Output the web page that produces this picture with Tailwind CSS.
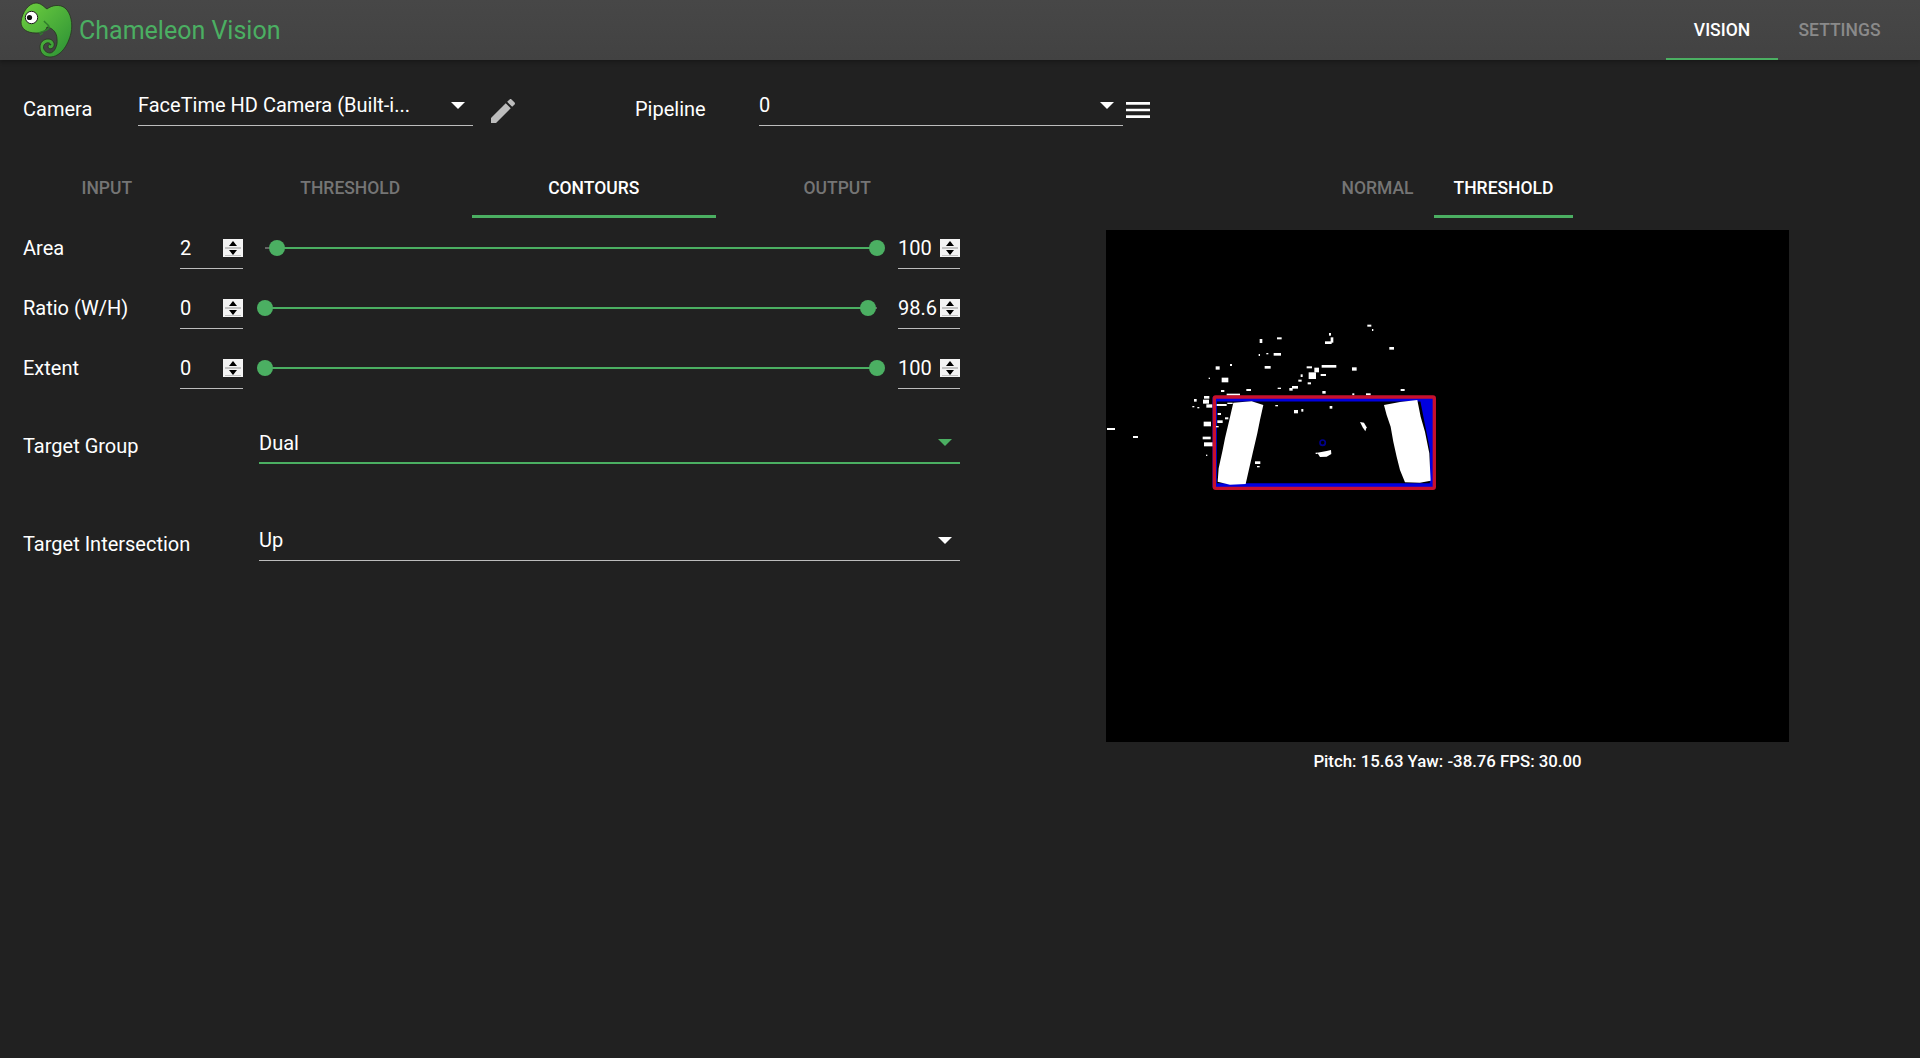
<!DOCTYPE html>
<html lang="en">
<head>
  <meta charset="UTF-8" />
  <title>Chameleon Vision</title>
  <script src="https://cdn.jsdelivr.net/npm/@tailwindcss/browser@4"></script>
</head>
<body class="bg-[#212121] text-white font-[Roboto,sans-serif] min-h-screen overflow-hidden subpixel-antialiased">

  <!-- App bar -->
  <header class="h-[60px] flex items-center justify-between bg-gradient-to-b from-[#474747] to-[#424242] shadow-[0_2px_4px_rgba(0,0,0,0.3)]">
    <div class="flex items-center">
      <svg class="ml-[20px] w-[54px] h-[60px]" viewBox="20 0 54 60">
        <defs>
          <linearGradient id="skin" x1="0" y1="0" x2="1" y2="1">
            <stop offset="0" stop-color="#6fd03f" />
            <stop offset="1" stop-color="#2a8f35" />
          </linearGradient>
        </defs>
        <path fill="url(#skin)" stroke="#26331f" stroke-width="0.8" d="M21 22 C22 12 29 3 36 3 C41 3 44 7 47 9 C52 5 60 4 65 8 C71 13 73 24 71 33 C68 46 60 57 50 57 C44 57 40 53 40 47 C40 42 44 39 48 39 C52 39 55 42 54 46 C53 49 49 50 48 47 C48 45 49 44 51 45 C50 42 46 42 44 45 C42 49 46 53 50 53 C54 53 58 46 57 39 C57 33 53 28 47 27 C46 31 42 33 36 33 C27 33 21 29 21 22 Z" />
        <path fill="none" stroke="#2f7d2c" stroke-width="1.4" d="M44 21 C46 24 50 25 49 28 C47 31 43 31 39 33 M43 33 L40 35" />
        <circle cx="31.5" cy="17.5" r="6.2" fill="#fff" stroke="#1c1c1c" stroke-width="1" />
        <circle cx="29.5" cy="17.5" r="2.6" fill="#111" />
      </svg>
      <span class="ml-[5px] pt-[2px] text-[25px] text-[#4baf62]">Chameleon Vision</span>
    </div>
    <nav class="flex h-full mr-[19px] text-[17.5px] font-medium">
      <a class="h-full w-[112px] pt-[3px] flex items-center justify-center border-b-2 border-[#4baf62]">VISION</a>
      <a class="h-full w-[123px] pt-[3px] flex items-center justify-center border-b-2 border-transparent text-[#8a8a8a]">SETTINGS</a>
    </nav>
  </header>

  <main class="pt-[25px]">
    <!-- Camera / pipeline -->
    <div class="flex pl-[23px] h-[41px]">
      <label class="w-[115px] pt-[12px] text-[20px] leading-[24px]">Camera</label>
      <div class="w-[335px] h-[41px] border-b border-[#bdbdbd] flex items-center justify-between pr-[8px] text-[20px]">
        <span>FaceTime HD Camera (Built-i...</span>
        <svg class="w-[14px] h-[7px]" viewBox="0 0 14 7"><polygon points="0,0 14,0 7,7" fill="#fff" /></svg>
      </div>
      <svg class="ml-[14px] mt-[10px] w-[32px] h-[32px]" viewBox="0 0 24 24"><path fill="#bdbdbd" d="M20.71,7.04C21.1,6.65 21.1,6 20.71,5.63L18.37,3.29C18,2.9 17.35,2.9 16.96,3.29L15.12,5.12L18.87,8.87M3,17.25V21H6.75L17.81,9.93L14.06,6.18L3,17.25Z" /></svg>
      <label class="ml-[116px] w-[124px] pt-[12px] text-[20px] leading-[24px]">Pipeline</label>
      <div class="w-[364px] h-[41px] border-b border-[#bdbdbd] flex items-center justify-between pr-[9px] text-[20px]">
        <span>0</span>
        <svg class="w-[14px] h-[7px]" viewBox="0 0 14 7"><polygon points="0,0 14,0 7,7" fill="#fff" /></svg>
      </div>
      <svg class="ml-[-1px] mt-[9px] w-[32px] h-[32px]" viewBox="0 0 24 24"><path fill="#fff" d="M3,6H21V8H3V6M3,11H21V13H3V11M3,16H21V18H3V16Z" /></svg>
    </div>

    <div class="flex">
      <!-- Left column -->
      <section class="w-[960px] shrink-0">
        <div class="mt-[34px] ml-[-15px] flex h-[58px] text-[17.5px] font-medium text-[#757575]">
          <a class="w-[243.5px] pt-[2px] flex items-center justify-center border-b-[3px] border-transparent">INPUT</a>
          <a class="w-[243.5px] pt-[2px] flex items-center justify-center border-b-[3px] border-transparent">THRESHOLD</a>
          <a class="w-[243.5px] pt-[2px] flex items-center justify-center border-b-[3px] border-[#4baf62] text-white">CONTOURS</a>
          <a class="w-[243.5px] pt-[2px] flex items-center justify-center border-b-[3px] border-transparent">OUTPUT</a>
        </div>

        <div class="pl-[23px]">
          <div class="flex items-center h-[60px]">
            <label class="w-[157px] text-[20px]">Area</label>
            <div class="w-[63px] h-[41px] border-b border-[#bdbdbd] flex items-center justify-between">
              <input type="text" value="2" class="w-[40px] bg-transparent text-[20px] outline-none" />
              <svg class="w-[20px] h-[18px]" viewBox="0 0 20 18"><rect width="20" height="18" fill="#f4f4f4" /><rect x="2" y="8" width="16" height="2" fill="#c4c4c4" /><rect x="2" y="16" width="16" height="1" fill="#c4c4c4" /><polygon points="10,2 6,7 14,7" fill="#000" /><polygon points="6,11 14,11 10,16" fill="#000" /></svg>
            </div>
            <div class="relative flex-1 h-[2px] mx-[21.5px] bg-white/30">
              <div class="absolute inset-y-0 bg-[#4baf62]" style="left:2%;right:0%"></div>
              <div class="absolute top-[-7px] -ml-[8px] w-[16px] h-[16px] rounded-full bg-[#4baf62]" style="left:2%"></div>
              <div class="absolute top-[-7px] -ml-[8px] w-[16px] h-[16px] rounded-full bg-[#4baf62]" style="left:100%"></div>
            </div>
            <div class="w-[62px] h-[41px] border-b border-[#bdbdbd] flex items-center justify-between">
              <input type="text" value="100" class="w-[40px] bg-transparent text-[20px] outline-none" />
              <svg class="w-[20px] h-[18px]" viewBox="0 0 20 18"><rect width="20" height="18" fill="#f4f4f4" /><rect x="2" y="8" width="16" height="2" fill="#c4c4c4" /><rect x="2" y="16" width="16" height="1" fill="#c4c4c4" /><polygon points="10,2 6,7 14,7" fill="#000" /><polygon points="6,11 14,11 10,16" fill="#000" /></svg>
            </div>
          </div>
          <div class="flex items-center h-[60px]">
            <label class="w-[157px] text-[20px]">Ratio (W/H)</label>
            <div class="w-[63px] h-[41px] border-b border-[#bdbdbd] flex items-center justify-between">
              <input type="text" value="0" class="w-[40px] bg-transparent text-[20px] outline-none" />
              <svg class="w-[20px] h-[18px]" viewBox="0 0 20 18"><rect width="20" height="18" fill="#f4f4f4" /><rect x="2" y="8" width="16" height="2" fill="#c4c4c4" /><rect x="2" y="16" width="16" height="1" fill="#c4c4c4" /><polygon points="10,2 6,7 14,7" fill="#000" /><polygon points="6,11 14,11 10,16" fill="#000" /></svg>
            </div>
            <div class="relative flex-1 h-[2px] mx-[21.5px] bg-white/30">
              <div class="absolute inset-y-0 bg-[#4baf62]" style="left:0%;right:1.4%"></div>
              <div class="absolute top-[-7px] -ml-[8px] w-[16px] h-[16px] rounded-full bg-[#4baf62]" style="left:0%"></div>
              <div class="absolute top-[-7px] -ml-[8px] w-[16px] h-[16px] rounded-full bg-[#4baf62]" style="left:98.6%"></div>
            </div>
            <div class="w-[62px] h-[41px] border-b border-[#bdbdbd] flex items-center justify-between">
              <input type="text" value="98.6" class="w-[40px] bg-transparent text-[20px] outline-none" />
              <svg class="w-[20px] h-[18px]" viewBox="0 0 20 18"><rect width="20" height="18" fill="#f4f4f4" /><rect x="2" y="8" width="16" height="2" fill="#c4c4c4" /><rect x="2" y="16" width="16" height="1" fill="#c4c4c4" /><polygon points="10,2 6,7 14,7" fill="#000" /><polygon points="6,11 14,11 10,16" fill="#000" /></svg>
            </div>
          </div>
          <div class="flex items-center h-[60px]">
            <label class="w-[157px] text-[20px]">Extent</label>
            <div class="w-[63px] h-[41px] border-b border-[#bdbdbd] flex items-center justify-between">
              <input type="text" value="0" class="w-[40px] bg-transparent text-[20px] outline-none" />
              <svg class="w-[20px] h-[18px]" viewBox="0 0 20 18"><rect width="20" height="18" fill="#f4f4f4" /><rect x="2" y="8" width="16" height="2" fill="#c4c4c4" /><rect x="2" y="16" width="16" height="1" fill="#c4c4c4" /><polygon points="10,2 6,7 14,7" fill="#000" /><polygon points="6,11 14,11 10,16" fill="#000" /></svg>
            </div>
            <div class="relative flex-1 h-[2px] mx-[21.5px] bg-white/30">
              <div class="absolute inset-y-0 bg-[#4baf62]" style="left:0%;right:0%"></div>
              <div class="absolute top-[-7px] -ml-[8px] w-[16px] h-[16px] rounded-full bg-[#4baf62]" style="left:0%"></div>
              <div class="absolute top-[-7px] -ml-[8px] w-[16px] h-[16px] rounded-full bg-[#4baf62]" style="left:100%"></div>
            </div>
            <div class="w-[62px] h-[41px] border-b border-[#bdbdbd] flex items-center justify-between">
              <input type="text" value="100" class="w-[40px] bg-transparent text-[20px] outline-none" />
              <svg class="w-[20px] h-[18px]" viewBox="0 0 20 18"><rect width="20" height="18" fill="#f4f4f4" /><rect x="2" y="8" width="16" height="2" fill="#c4c4c4" /><rect x="2" y="16" width="16" height="1" fill="#c4c4c4" /><polygon points="10,2 6,7 14,7" fill="#000" /><polygon points="6,11 14,11 10,16" fill="#000" /></svg>
            </div>
          </div>

          <div class="flex mt-[25px]">
            <label class="w-[236px] pt-[11px] text-[20px] leading-[24px]">Target Group</label>
            <div class="flex-1 h-[41px] border-b-2 border-[#4baf62] flex items-center justify-between pr-[8px] text-[20px]">
              <span>Dual</span>
              <svg class="w-[14px] h-[7px]" viewBox="0 0 14 7"><polygon points="0,0 14,0 7,7" fill="#4baf62" /></svg>
            </div>
          </div>
          <div class="flex mt-[56px]">
            <label class="w-[236px] pt-[12px] text-[20px] leading-[24px]">Target Intersection</label>
            <div class="flex-1 h-[41px] border-b border-[#bdbdbd] flex items-center justify-between pr-[8px] text-[20px]">
              <span>Up</span>
              <svg class="w-[14px] h-[7px]" viewBox="0 0 14 7"><polygon points="0,0 14,0 7,7" fill="#fff" /></svg>
            </div>
          </div>
        </div>
      </section>

      <!-- Right column -->
      <section class="ml-[146px] w-[683px] flex flex-col items-center">
        <div class="mt-[34px] flex h-[58px] text-[17.5px] font-medium text-[#757575]">
          <a class="px-[20px] pt-[2px] flex items-center border-b-[3px] border-transparent">NORMAL</a>
          <a class="px-[20px] pt-[2px] flex items-center border-b-[3px] border-[#4baf62] text-white">THRESHOLD</a>
        </div>
        <svg class="mt-[12px] w-[683px] h-[512px] bg-black" viewBox="0 0 683 512">
          <rect x="1" y="198" width="8" height="2" fill="#fff" />
          <rect x="27" y="206" width="5" height="2" fill="#fff" />
          <g transform="translate(74 80) scale(0.3333)" fill="#fff" class="blur-[0.35px]">
            <path fill="none" stroke="#0000e0" stroke-width="13" d="M104 268 H756 V526 H104 Z" />
            <path fill="#0000e0" d="M720 268 H756 V526 H752 L750 420 Z" />
            <polygon points="160,278 215,274 250,285 240,330 232,370 218,430 197,522 150,524 113,515 116,475 128,420 135,385 148,330" />
            <polygon points="612,285 660,276 712,270 722,320 735,365 748,430 752,512 720,518 675,517 660,480 650,440 640,395 632,350 620,315" />
            <rect x="562" y="44" width="12" height="6" /><rect x="576" y="57" width="4" height="6" /><rect x="239" y="87" width="8" height="12" /><rect x="291" y="82" width="14" height="6" />
            <rect x="447" y="69" width="6" height="8" /><rect x="435" y="94" width="20" height="8" /><rect x="452" y="82" width="8" height="16" /><rect x="628" y="111" width="14" height="8" />
            <rect x="281" y="129" width="22" height="8" /><rect x="236" y="132" width="4" height="6" /><rect x="259" y="129" width="6" height="4" /><rect x="425" y="165" width="44" height="8" />
            <rect x="254" y="168" width="18" height="8" /><rect x="107" y="169" width="12" height="10" /><rect x="150" y="162" width="6" height="6" /><rect x="380" y="169" width="16" height="6" />
            <rect x="516" y="172" width="14" height="10" /><rect x="403" y="173" width="14" height="14" /><rect x="386" y="187" width="22" height="20" /><rect x="422" y="192" width="16" height="6" />
            <rect x="362" y="193" width="6" height="8" /><rect x="355" y="209" width="10" height="6" /><rect x="383" y="217" width="10" height="6" /><rect x="125" y="203" width="20" height="14" />
            <rect x="86" y="203" width="4" height="4" /><rect x="336" y="228" width="18" height="8" /><rect x="328" y="234" width="10" height="8" /><rect x="293" y="233" width="10" height="4" />
            <rect x="199" y="237" width="14" height="6" /><rect x="123" y="240" width="10" height="6" /><rect x="140" y="251" width="40" height="6" /><rect x="427" y="243" width="10" height="8" />
            <rect x="517" y="250" width="6" height="6" /><rect x="558" y="250" width="14" height="6" /><rect x="662" y="237" width="12" height="6" /><rect x="72" y="258" width="16" height="8" />
            <rect x="42" y="267" width="8" height="8" /><rect x="69" y="269" width="18" height="12" /><rect x="79" y="283" width="18" height="10" /><rect x="37" y="288" width="6" height="4" />
            <rect x="52" y="291" width="6" height="4" /><rect x="110" y="282" width="30" height="6" /><rect x="142" y="278" width="16" height="4" /><rect x="113" y="309" width="10" height="6" />
            <rect x="112" y="331" width="16" height="8" /><rect x="135" y="322" width="10" height="6" /><rect x="71" y="335" width="22" height="14" /><rect x="68" y="380" width="24" height="8" />
            <rect x="72" y="397" width="26" height="12" /><rect x="78" y="434" width="4" height="4" /><rect x="108" y="348" width="8" height="4" /><rect x="286" y="285" width="8" height="4" />
            <rect x="342" y="300" width="12" height="10" /><rect x="364" y="297" width="6" height="8" /><rect x="449" y="288" width="8" height="8" /><polygon points="540,336 552,338 560,352 556,364 548,352" />
            <polygon points="412,428 440,423 453,420 454,432 440,440 420,441" /><rect x="407" y="428" width="6" height="4" /><rect x="225" y="454" width="16" height="8" /><rect x="231" y="468" width="8" height="4" />
            <circle cx="428" cy="398" r="8" fill="none" stroke="#00008b" stroke-width="5" />
            <rect x="103" y="261" width="660" height="274" rx="4" fill="none" stroke="#c8102e" stroke-width="10" />
          </g>
        </svg>
        <p class="mt-[9px] text-[16.8px] font-medium leading-[20px]">Pitch: 15.63 Yaw: -38.76 FPS: 30.00</p>
      </section>
    </div>
  </main>
</body>
</html>
